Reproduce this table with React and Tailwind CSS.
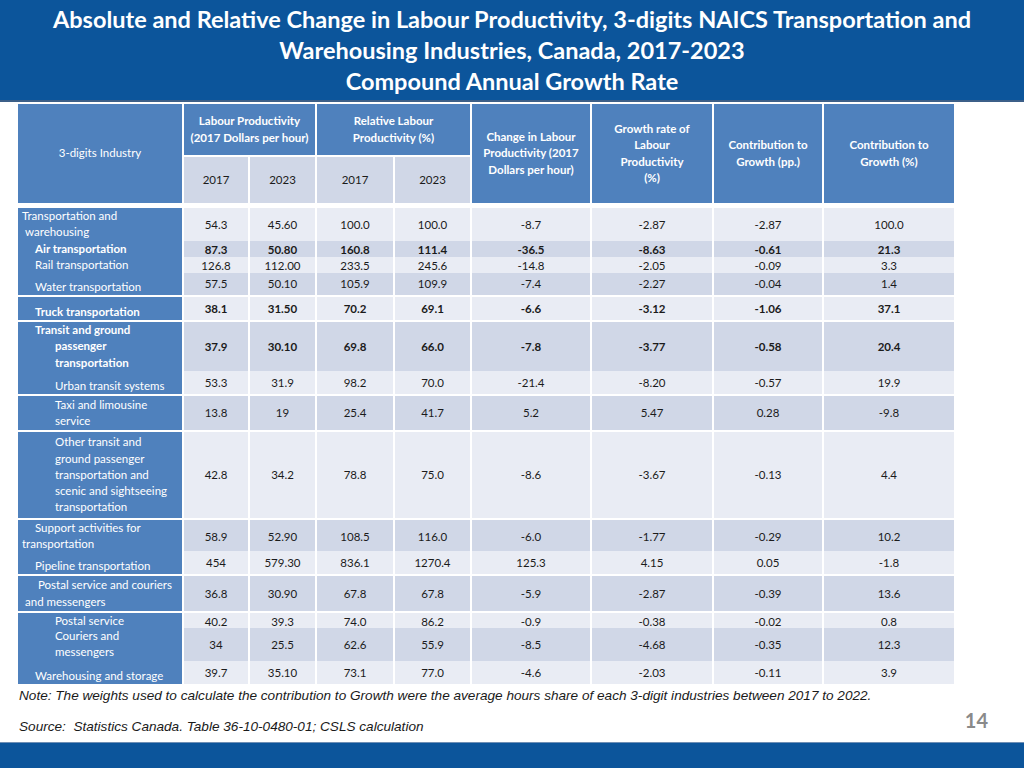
const COLS = 'grid grid-cols-[164px_64px_65px_76px_75px_118px_120px_108px_130px] gap-x-[2px]';

const rows = [
  { h: 'h-[31px]', lines: [['Transportation and', 'pl-[4px]'], ['warehousing', 'pl-[7px]']], v: ['54.3', '45.60', '100.0', '100.0', '-8.7', '-2.87', '-2.87', '100.0'] },
  { h: 'h-[14px]', bold: true, lines: [['Air transportation', 'pl-[17px]']], v: ['87.3', '50.80', '160.8', '111.4', '-36.5', '-8.63', '-0.61', '21.3'] },
  { h: 'h-[14px]', lines: [['Rail transportation', 'pl-[17px]']], v: ['126.8', '112.00', '233.5', '245.6', '-14.8', '-2.05', '-0.09', '3.3'] },
  { h: 'h-[22px]', end: true, lines: [['Water transportation', 'pl-[17px]']], v: ['57.5', '50.10', '105.9', '109.9', '-7.4', '-2.27', '-0.04', '1.4'] },
  { h: 'h-[23px]', end: true, bold: true, lines: [['Truck transportation', 'pl-[17px]']], v: ['38.1', '31.50', '70.2', '69.1', '-6.6', '-3.12', '-1.06', '37.1'] },
  { h: 'h-[47px]', bold: true, lines: [['Transit and ground', 'pl-[17px]'], ['passenger', 'pl-[37px]'], ['transportation', 'pl-[37px]']], v: ['37.9', '30.10', '69.8', '66.0', '-7.8', '-3.77', '-0.58', '20.4'] },
  { h: 'h-[23px]', end: true, lines: [['Urban transit systems', 'pl-[37px]']], v: ['53.3', '31.9', '98.2', '70.0', '-21.4', '-8.20', '-0.57', '19.9'] },
  { h: 'h-[34px]', lines: [['Taxi and limousine', 'pl-[37px]'], ['service', 'pl-[37px]']], v: ['13.8', '19', '25.4', '41.7', '5.2', '5.47', '0.28', '-9.8'] },
  { h: 'h-[86px]', lines: [['Other transit and', 'pl-[37px]'], ['ground passenger', 'pl-[37px]'], ['transportation and', 'pl-[37px]'], ['scenic and sightseeing', 'pl-[37px]'], ['transportation', 'pl-[37px]']], v: ['42.8', '34.2', '78.8', '75.0', '-8.6', '-3.67', '-0.13', '4.4'] },
  { h: 'h-[29px]', lines: [['Support activities for', 'pl-[17px]'], ['transportation', 'pl-[4px]']], v: ['58.9', '52.90', '108.5', '116.0', '-6.0', '-1.77', '-0.29', '10.2'] },
  { h: 'h-[23px]', end: true, lines: [['Pipeline transportation', 'pl-[17px]']], v: ['454', '579.30', '836.1', '1270.4', '125.3', '4.15', '0.05', '-1.8'] },
  { h: 'h-[35px]', lines: [['Postal service and couriers', 'pl-[20px]'], ['and messengers', 'pl-[7px]']], v: ['36.8', '30.90', '67.8', '67.8', '-5.9', '-2.87', '-0.39', '13.6'] },
  { h: 'h-[13px]', lines: [['Postal service', 'pl-[37px]']], v: ['40.2', '39.3', '74.0', '86.2', '-0.9', '-0.38', '-0.02', '0.8'] },
  { h: 'h-[31px]', lines: [['Couriers and', 'pl-[37px]'], ['messengers', 'pl-[37px]']], v: ['34', '25.5', '62.6', '55.9', '-8.5', '-4.68', '-0.35', '12.3'] },
  { h: 'h-[23px]', end: true, lines: [['Warehousing and storage', 'pl-[17px]']], v: ['39.7', '35.10', '73.1', '77.0', '-4.6', '-2.03', '-0.11', '3.9'] },
];

function HeadCell({ className = '', children }) {
  return (
    <div className={`bg-[#4f81bd] text-white flex items-center justify-center text-center leading-[16.5px] ${className}`}>
      {children}
    </div>
  );
}

function BodyRow({ row, dark }) {
  const fill = dark ? 'bg-[#d0d7e7]' : 'bg-[#e9ecf4]';
  return (
    <div className={`${COLS} ${row.h}`}>
      <div className={`bg-[#4f81bd] text-white flex flex-col overflow-visible leading-[16.3px] ${row.end ? 'justify-end' : 'justify-center'} ${row.bold ? 'font-bold' : ''}`}>
        {row.lines.map(([t, pl]) => (
          <div key={t} className={`${pl} whitespace-nowrap`}>{t}</div>
        ))}
      </div>
      {row.v.map((n, i) => (
        <div key={i} className={`${fill} flex items-center justify-center text-[#1b1b1b] ${row.bold ? 'font-bold' : ''}`}>
          {n}
        </div>
      ))}
    </div>
  );
}

export default function App() {
  return (
    <div className="w-[1024px] h-[768px] bg-white flex flex-col overflow-hidden font-['Lato','Noto_Sans',sans-serif]">
      {/* Title banner */}
      <div className="h-[102px] shrink-0 bg-[#0c559b] border-b-[2px] border-[#3c5f88] pt-[4px] text-white font-bold text-[23.5px] leading-[31px] text-center">
        <div>Absolute and Relative Change in Labour Productivity, 3-digits NAICS Transportation and</div>
        <div>Warehousing Industries, Canada, 2017-2023</div>
        <div>Compound Annual Growth Rate</div>
      </div>

      {/* Table */}
      <div className="ml-[18px] mt-[2px] flex flex-col gap-y-[2px] text-[11.5px]">
        <div className={`${COLS} grid-rows-[51px_46px] gap-y-[2px]`}>
          <HeadCell className="row-span-2">3-digits Industry</HeadCell>
          <HeadCell className="col-span-2 font-bold">Labour Productivity<br />(2017 Dollars per hour)</HeadCell>
          <HeadCell className="col-span-2 font-bold">Relative Labour<br />Productivity (%)</HeadCell>
          <HeadCell className="row-span-2 font-bold">Change in Labour<br />Productivity (2017<br />Dollars per hour)</HeadCell>
          <HeadCell className="row-span-2 font-bold">Growth rate of<br />Labour<br />Productivity<br />(%)</HeadCell>
          <HeadCell className="row-span-2 font-bold">Contribution to<br />Growth (pp.)</HeadCell>
          <HeadCell className="row-span-2 font-bold">Contribution to<br />Growth (%)</HeadCell>
          {['2017', '2023', '2017', '2023'].map((y, i) => (
            <div key={i} className="bg-[#d0d7e7] text-[#1b1b1b] flex items-center justify-center">{y}</div>
          ))}
        </div>
        <div className="h-[1px]" />
        {rows.map((r, i) => (
          <BodyRow key={i} row={r} dark={i % 2 === 1} />
        ))}
      </div>

      {/* Notes */}
      <div className="flex-1 relative px-[19px] text-[#1a1a1a] italic font-['Liberation_Sans',sans-serif] text-[13.6px] leading-[18px]">
        <div className="mt-[3px]">Note: The weights used to calculate the contribution to Growth were the average hours share of each 3-digit industries between 2017 to 2022.</div>
        <div className="mt-[13px]">Source:&nbsp; Statistics Canada. Table 36-10-0480-01; CSLS calculation</div>
        <div className="absolute right-[36px] top-[27px] not-italic font-bold text-[20px] text-[#8a8a8a] font-['Lato',sans-serif]">14</div>
      </div>

      {/* Bottom bar */}
      <div className="h-[26px] shrink-0 bg-[#0c559b] border-t border-[#6f8fb5]" />
    </div>
  );
}
